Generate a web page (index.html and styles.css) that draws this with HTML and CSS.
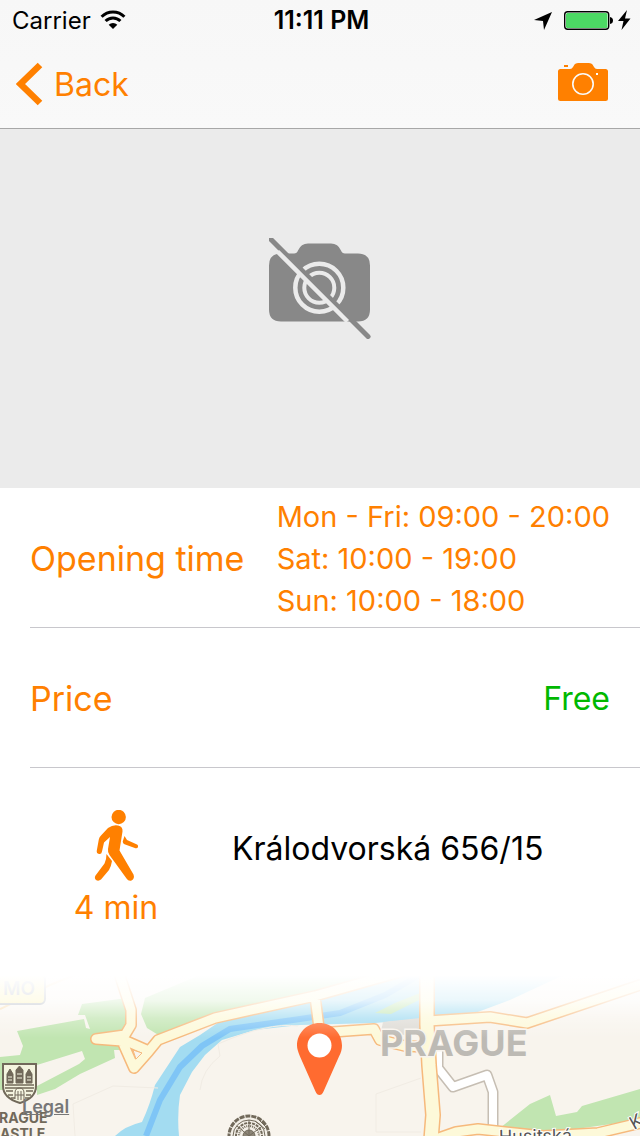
FILE: index.html
```html
<!DOCTYPE html>
<html lang="en">
<head>
<meta charset="utf-8">
<meta name="viewport" content="width=device-width, initial-scale=1">
<title>Place detail</title>
<link rel="stylesheet" href="styles.css">
</head>
<body>
<div class="screen">
  <header class="topbar">
    <div class="status">
      <div class="status-left">
        <span>Carrier</span>
        <svg class="wifi" width="26" height="20" viewBox="0 0 26 20" aria-hidden="true">
          <path d="M1.600 6.800a16 16 0 0 1 22.800 0M5.600 11a10.400 10.400 0 0 1 14.800 0" fill="none" stroke="#000" stroke-width="3"/>
          <path d="M13 19l-4.300-4.300a6 6 0 0 1 8.600 0z"/>
        </svg>
      </div>
      <span class="clock">11:11 PM</span>
      <div class="status-right">
        <svg width="98" height="22" viewBox="533 9 98 22" aria-hidden="true">
          <path d="M552 12l-8 18-1-9-9-1z"/>
          <rect x="564.700" y="11.700" width="44" height="17.600" rx="3" fill="#fff" stroke="#000" stroke-width="1.400"/>
          <rect x="566" y="13" width="41.500" height="15" rx="1.500" fill="#4cd964"/>
          <path d="M610 17q3 .5 3 3.500t-3 3.500z"/>
          <path d="M627 10l-9 11h5.500l-2 9 9-11.500H625z"/>
        </svg>
      </div>
    </div>
    <nav class="nav">
      <button class="back" type="button">
        <svg width="28" height="44" viewBox="0 0 28 44" aria-hidden="true"><path d="M24 3L4.500 22 24 41" fill="none" stroke="#ff8000" stroke-width="6.500"/></svg>
        <span>Back</span>
      </button>
      <button class="camera" type="button" aria-label="Add photo">
        <svg width="50" height="42" viewBox="0 0 50 42" aria-hidden="true">
          <path d="M2.500 6H12q2 0 3-2l1.500-2.500Q17.500 0 20 0h11q2.500 0 3.500 1.500L36 4q1 2 3 2h8.500Q50 6 50 8.500v27q0 2.500-2.500 2.500h-45Q0 38 0 35.500v-27Q0 6 2.500 6z" fill="#ff8000"/>
          <rect x="6" y="2" width="4" height="2" fill="#ff8000"/>
          <circle cx="25" cy="21" r="10.200" fill="none" stroke="#fafafa" stroke-width="1.600"/>
          <rect x="38" y="10" width="2" height="2" fill="#fff"/>
        </svg>
      </button>
    </nav>
  </header>

  <main class="content">
    <div class="photo">
      <svg width="102" height="101" viewBox="269 238 102 101" role="img" aria-label="No photo">
        <path d="M281 253.500h13q3 0 4-3 3-7 10-7h23q7 0 10 7 1 3 4 3h13q12 0 12 12v44q0 12-12 12h-77q-12 0-12-12v-44q0-12 12-12z" fill="#888"/>
        <circle cx="319.300" cy="287.700" r="24" fill="none" stroke="#ebebeb" stroke-width="4.500"/>
        <circle cx="319.300" cy="287.700" r="15" fill="none" stroke="#ebebeb" stroke-width="4"/>
        <path d="M271 239.500l97 97" stroke="#888" stroke-width="5" stroke-linecap="round"/>
        <path d="M277.500 251.500l70 70" stroke="#ebebeb" stroke-width="4.500"/>
      </svg>
    </div>

    <dl class="facts">
      <div class="row">
        <dt>Opening time</dt>
        <dd class="hours">Mon - Fri: 09:00 - 20:00<br>Sat: 10:00 - 19:00<br>Sun: 10:00 - 18:00</dd>
      </div>
      <div class="row">
        <dt>Price</dt>
        <dd class="free">Free</dd>
      </div>
    </dl>

    <section class="route">
      <div class="walk">
        <svg width="44" height="72" viewBox="94 810 44 72" aria-hidden="true">
          <g fill="#ff8000">
            <circle cx="118.700" cy="817" r="7.200"/>
            <path d="M108 828q5-3.500 10-2.500 5 1 4.500 6l-3 19 14 24q1.500 4-2 6-3 1-5-2L109.500 855q-2-3-1.500-6l2-12-6 5.500-2 9q-.5 3-3 2.500-2.700-.5-2.200-3.500l2-11q.5-2.500 2.200-4z"/>
            <path d="M124.500 836l2.500 4 10 4.500q1.500 1 1 2.500t-2.500 1.200l-11-4q-2-1-1.700-3z"/>
            <path d="M106.500 854l5.500 7q-1 6-3 9l-8 9.500q-2.500 2-5 .5-2-2-.5-4.500l9-12q2-4 2-9.500z"/>
          </g>
        </svg>
        <span>4 min</span>
      </div>
      <address class="address">Králodvorská 656/15</address>
    </section>

    <section class="map" aria-label="Map">
      <svg class="map-art" viewBox="0 960 640 176" preserveAspectRatio="xMidYMin slice" aria-hidden="true">
        <defs>
          <linearGradient id="fade" x1="0" y1="0" x2="0" y2="1">
            <stop offset="0" stop-color="#fff"/>
            <stop offset=".2" stop-color="#fff"/>
            <stop offset=".52" stop-color="#fff" stop-opacity=".78"/>
            <stop offset=".75" stop-color="#fff" stop-opacity=".3"/>
            <stop offset="1" stop-color="#fff" stop-opacity="0"/>
          </linearGradient>
        </defs>
        <rect y="960" width="640" height="176" fill="#f8f4ed"/>
        <g fill="#c1e5b1">
          <path d="M0 1057L20 1055L23 1046L17 1031L84 1019L86 1028L90 1029L85 1015L78 1015L82 1004L127 998L130 1035L122 1050H114L115 1058L80 1074L55 1089L37 1095V1086L79 1064L85 1059L82 1051L37 1065V1090H0z"/>
          <path d="M145 998L200 975H400L310 996L215 1018L160 1036L147 1028L141 1014z"/>
          <path d="M500 1128l30-24 20-9 6 21 21-4 5-6 58-17v31l-64 9-70 6z"/>
        </g>
        <path d="M115 1136Q125 1126 142 1122Q150 1105 155 1085L180 1047L200 1035L222 1020L315 996L400 972H570L510 1000L475 1013L420 1019L375 1023L300 1025L255 1030L222 1040L205 1055L192 1072L180 1095Q177 1115 179 1136z" fill="#a3dcf1"/>
        <path d="M146 1136l14-36 20-33 22-21 28-17 70-10 40-6 45-18 45-26" fill="none" stroke="#7fc5f6" stroke-width="6"/>
        <path d="M375 1013l20-10 40-16-14 12-30 15z" fill="#c1e5b1"/>
        <path d="M383 1022l37-4v16l-40 2z" fill="#dedbd5"/>
        <g fill="none" stroke="#f1ece4" stroke-width="1">
          <path d="M75 1136l-2-32 40-18 45 2M376 1132v-38l45-16M376 1132h45M200 1090q2-20 20-34l-2-12q50-22 80-18"/>
        </g>
        <path d="M438 1040v28l15 19 34-12 6 17v48" fill="none" stroke="#c6beb3" stroke-width="11" stroke-linejoin="round"/>
        <path d="M438 1040v28l15 19 34-12 6 17v48" fill="none" stroke="#fff" stroke-width="8" stroke-linejoin="round"/>
        <path d="M0 1009l50-24 32-13" fill="none" stroke="#f8d9a8" stroke-width="2"/>
        <g fill="none" stroke="#f6b97c" stroke-width="12" stroke-linejoin="round" stroke-linecap="round">
          <path d="M118 970L131 1010V1025L125 1035L96 1039L122 1041L134 1068L149 1051L124 1040M149 1051L158 1040L215 1018L315 996L400 972M315 996L319 1028V1033L374 1029L380 1040L405 1046L425 1047M428 1021l62-4 37 6 113-38M436 1139l20-7 22-3 65 7 55-3 42-10"/>
          <path d="M427 950v75l2 40 4 50-2 25" stroke-width="16"/>
        </g>
        <g fill="none" stroke="#fdf9d9" stroke-width="9" stroke-linejoin="round" stroke-linecap="round">
          <path d="M118 970L131 1010V1025L125 1035L96 1039L122 1041L134 1068L149 1051L124 1040M149 1051L158 1040L215 1018L315 996L400 972M315 996L319 1028V1033L374 1029L380 1040L405 1046L425 1047M428 1021l62-4 37 6 113-38M436 1139l20-7 22-3 65 7 55-3 42-10"/>
          <path d="M427 950v75l2 40 4 50-2 25" stroke-width="13"/>
        </g>
        <path d="M133 1050l9 3-6 6z" fill="#f8f4ed" stroke="#f6b97c"/>
        <rect x="-8" y="974" width="53" height="30" rx="5" fill="#fbf0a5" stroke="#a7adb7" stroke-width="2"/>
        <text class="badge-label" x="3" y="995">MO</text>
        <text class="city" x="380" y="1056">PRAGUE</text>
        <text class="street" x="499" y="1143" transform="rotate(-1 499 1143)">Husitská</text>
        <text class="street" x="634" y="1130" transform="rotate(-30 634 1130)">K</text>
        <g stroke="#71695a">
          <path d="M3 1064h33v22q0 12-16 17-17-5-17-17z" fill="#f4f4df" stroke-width="2"/>
          <path d="M5 1085h29M5 1088h29M6 1091h7m13 0h7M8 1095h5m13 0h5M11 1098h4m10 0h4" stroke-width="1.500"/>
          <path d="M15 1099v-6q0-5 4.500-5t4.500 5v6M18 1091v9M21 1091v9M15 1095h9" fill="none"/>
          <path d="M7 1083v-9l3-5 3 5v9zM16 1083v-13l3.500-4 3.500 4v13zM26 1083v-9l3-5 3 5v9z" fill="#71695a"/>
          <path d="M8 1077h4m-4 3h4m5-6h5m-5 4h5m5-1h4m-4 3h4" stroke="#f4f4df"/>
        </g>
        <text class="poi" x="-10" y="1123">PRAGUE</text>
        <text class="poi" x="-10" y="1139">CASTLE</text>
        <g fill="none" stroke="#71695a">
          <circle cx="249" cy="1136" r="20" fill="#f3efe7" stroke-width="3" stroke-dasharray="5 1"/>
          <circle cx="249" cy="1136" r="16"/>
          <circle cx="249" cy="1136" r="13" stroke-width="2" stroke-dasharray="3 1"/>
          <circle cx="249" cy="1136" r="10" stroke-width="2" stroke-dasharray="1 1"/>
          <circle cx="249" cy="1136" r="6" fill="#8d8678"/>
          <path d="M249 1136v-16M249 1136l-12-10M249 1136l12-9M255 1121l10 8M259 1120l9 9"/>
        </g>
        <path d="M297 1045.500C297 1033 307 1023 319.500 1023S342 1033 342 1045.500c0 4-1 7-3 11l-15.500 35q-1.500 3.500-4 3.500t-4-3.500l-15.500-35q-3-7-3-11z" fill="#ff6b30"/>
        <rect y="960" width="640" height="78" fill="url(#fade)"/>
        <circle cx="319.500" cy="1045.500" r="12" fill="#fff"/>
      </svg>
      <a class="legal" href="#legal">Legal</a>
    </section>
  </main>
</div>
</body>
</html>
```
FILE: styles.css
```css
* {
  box-sizing: border-box;
}

body {
  margin: 0;
  background: #fff;
  color: #000;
  font-family: Inter, "Liberation Sans", sans-serif;
}

button {
  padding: 0;
  border: 0;
  background: none;
  font: inherit;
  color: inherit;
}

svg {
  display: block;
}

.screen {
  display: flex;
  flex-direction: column;
  min-height: 100vh;
}

.topbar {
  background: linear-gradient(#f7f7f7, #f9f9f9);
  border-bottom: 1px solid #a7a7a7;
}

.status {
  display: grid;
  grid-template-columns: 1fr auto 1fr;
  align-items: center;
  height: 40px;
  padding: 0 9px 0 12px;
  font-size: 24px;
}

.status-left {
  display: flex;
  align-items: center;
  gap: 9px;
}

.clock {
  font-size: 25px;
  font-weight: 600;
}

.status-right {
  justify-self: end;
}

.nav {
  display: flex;
  align-items: center;
  justify-content: space-between;
  height: 88px;
  padding: 0 32px 0 16px;
}

.back {
  display: flex;
  align-items: center;
  gap: 10px;
  color: #ff8000;
  font-size: 32px;
}

.content {
  display: flex;
  flex: 1;
  flex-direction: column;
}

.photo {
  display: grid;
  place-items: center;
  height: 359px;
  padding-bottom: 40px;
  background: #ebebeb;
}

.facts {
  margin: 0;
  padding-left: 30px;
}

.row {
  display: flex;
  align-items: center;
  justify-content: space-between;
  min-height: 140px;
  padding: 2px 30px 0 0;
  border-bottom: 1px solid #c8c7cc;
  color: #ff8000;
}

dt {
  font-size: 34px;
}

dd {
  margin: 0;
}

.hours {
  font-size: 29px;
  line-height: 42px;
}

.free {
  color: #00b800;
  font-size: 32px;
}

.route {
  display: flex;
  align-items: center;
  min-height: 192px;
  padding: 8px 30px 0;
}

.walk {
  display: flex;
  flex-direction: column;
  align-items: center;
  gap: 6px;
  width: 172px;
  color: #ff8000;
  font-size: 32px;
}

.address {
  padding: 0 0 40px 30px;
  font-size: 32px;
  font-style: normal;
}

.map {
  position: relative;
  flex: 1;
  min-height: 176px;
  overflow: hidden;
}

.map-art {
  position: absolute;
  inset: 0;
  width: 100%;
  height: 100%;
}

.badge-label {
  fill: #9aa3b5;
  font-size: 19px;
  font-weight: 600;
}

.city {
  fill: #bdbab4;
  stroke: #f8f4ed;
  stroke-width: 3px;
  paint-order: stroke;
  font-size: 36px;
  font-weight: 700;
}

.street {
  fill: #555;
  stroke: #fff;
  stroke-width: 2px;
  paint-order: stroke;
  font-size: 18px;
}

.poi {
  fill: #71695a;
  stroke: #f8f4ed;
  stroke-width: 3px;
  paint-order: stroke;
  font-size: 14px;
  font-weight: 700;
}

.legal {
  position: absolute;
  bottom: 18px;
  left: 22px;
  color: #777;
  font-size: 18px;
  font-weight: 600;
  line-height: 22px;
}
```
